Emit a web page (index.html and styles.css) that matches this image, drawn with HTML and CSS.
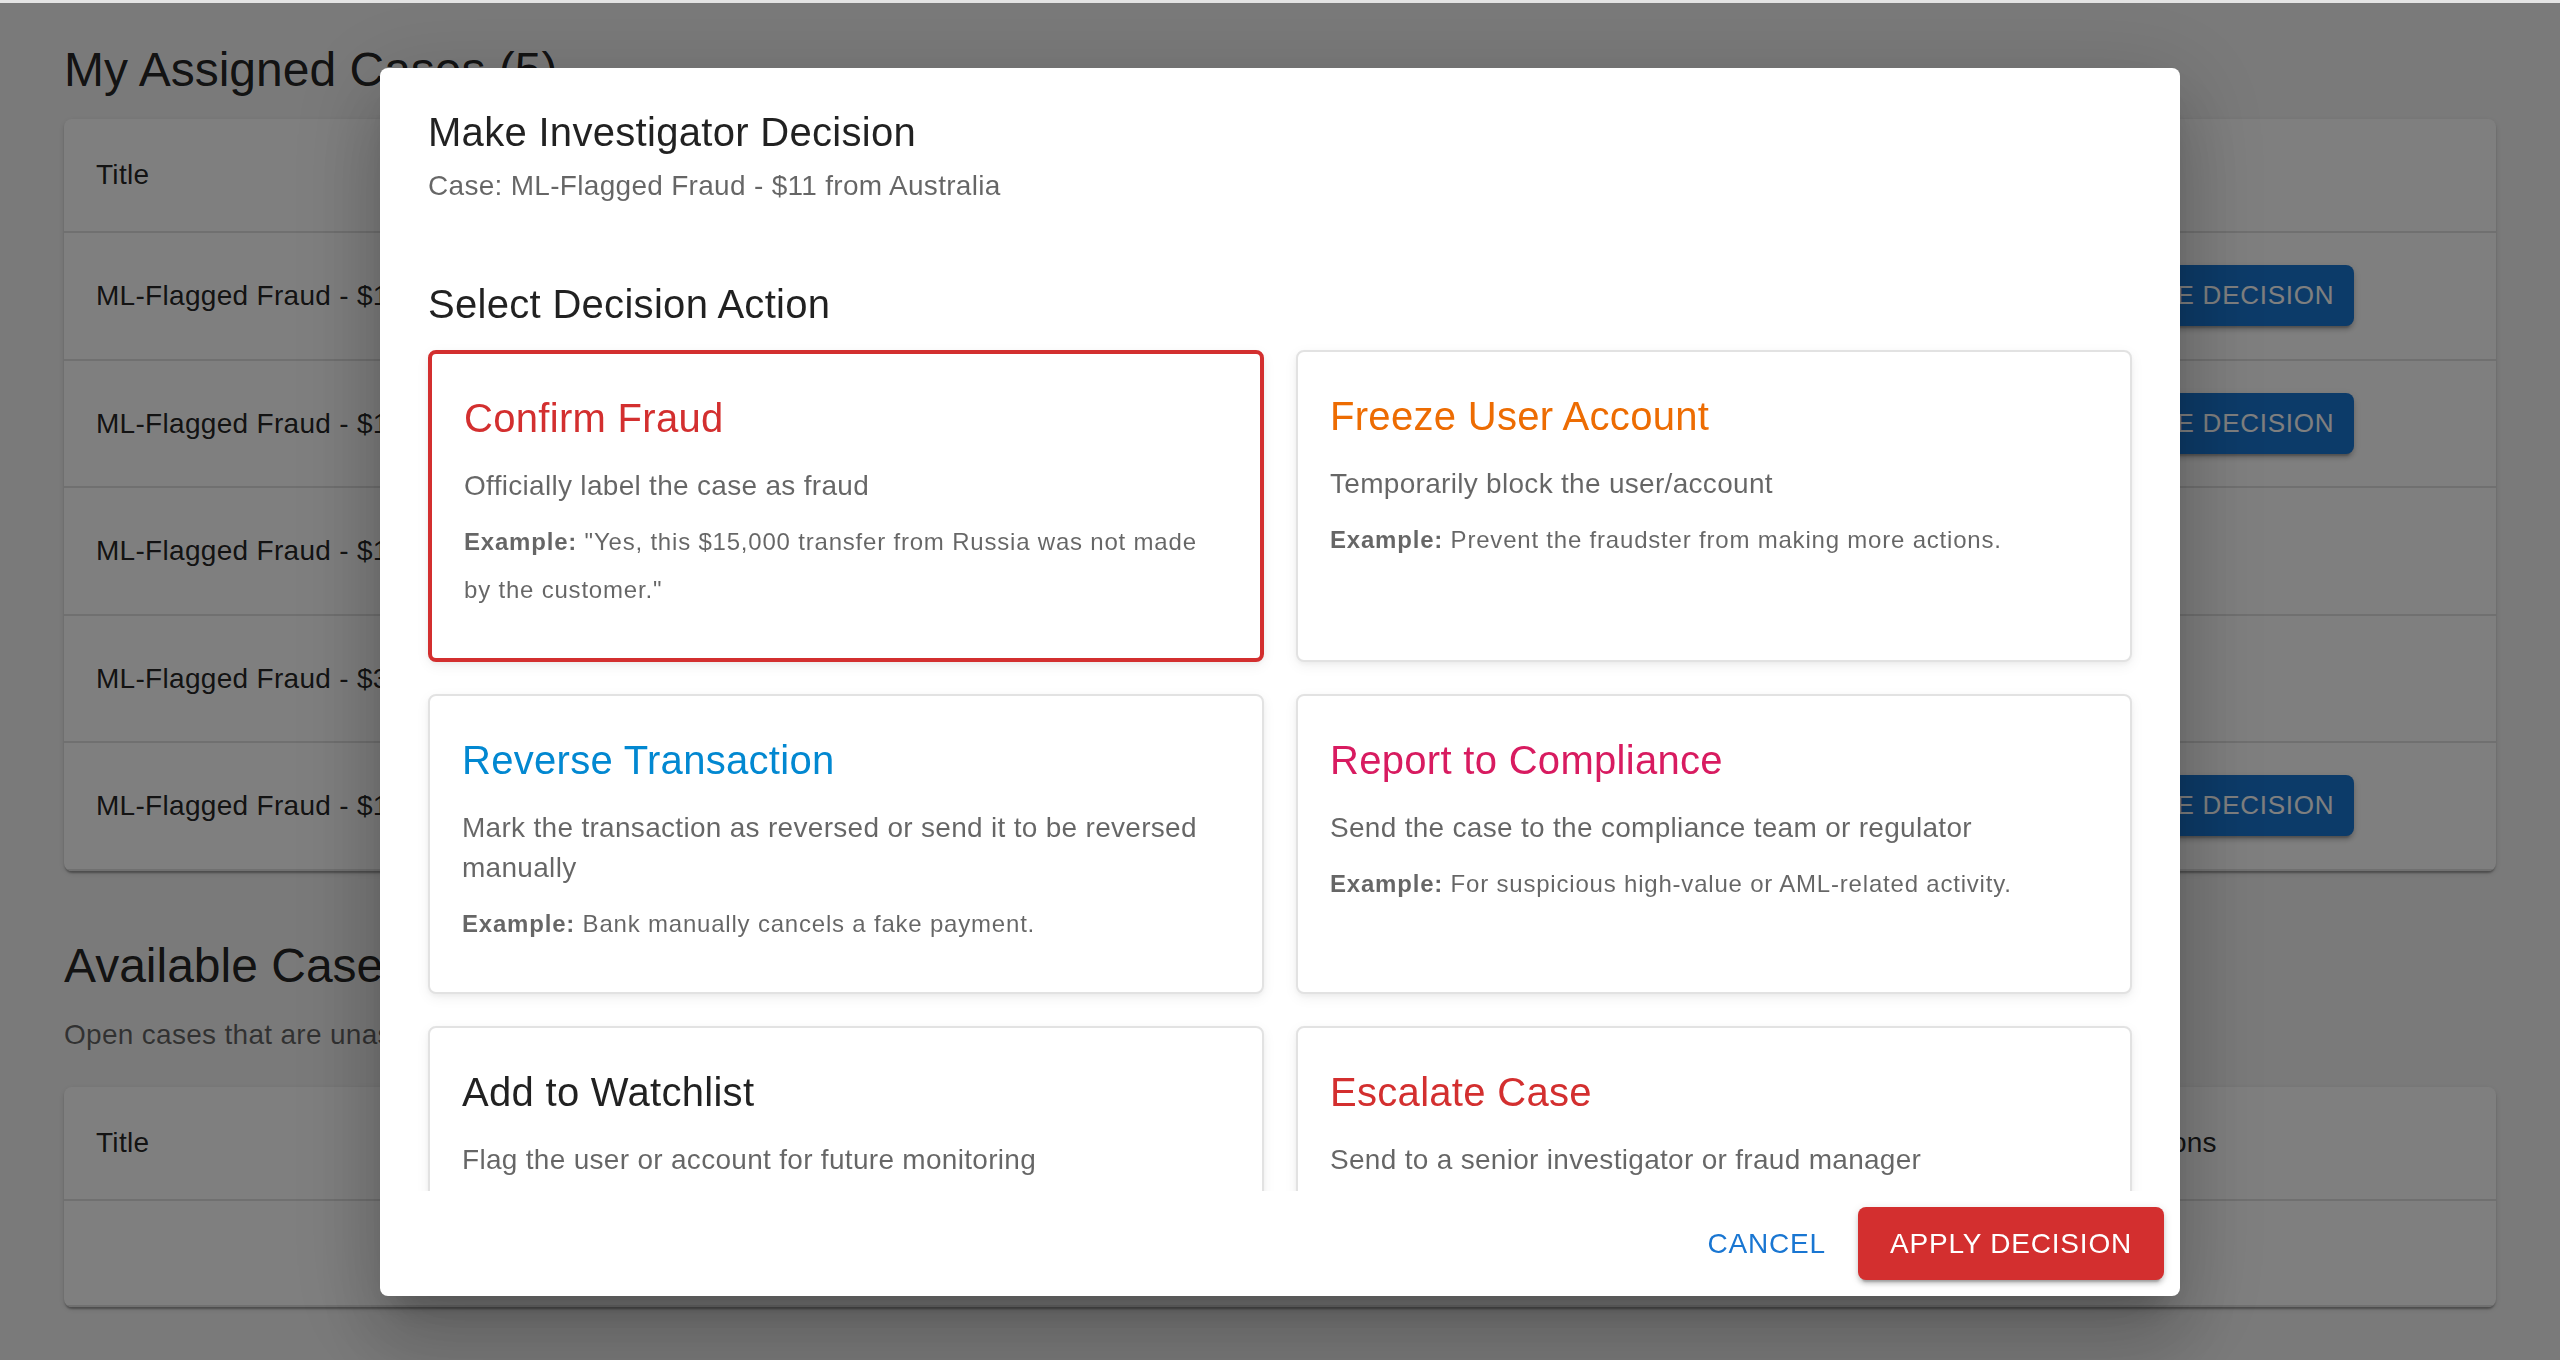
FILE: index.html
```html
<!DOCTYPE html>
<html lang="en">
<head>
<meta charset="utf-8">
<title>Investigator Cases</title>
<link rel="stylesheet" href="styles.css">
</head>
<body>
<div class="page">
  <h2 class="section-title">My Assigned Cases (5)</h2>
  <div class="paper">
    <table class="cases">
      <colgroup>
        <col class="w-title"><col class="w-mid"><col class="w-mid"><col class="w-mid"><col class="w-status"><col class="w-actions">
      </colgroup>
      <thead>
        <tr><th>Title</th><th>Amount</th><th>Country</th><th>Risk Score</th><th>Status</th><th>Actions</th></tr>
      </thead>
      <tbody>
        <tr><td>ML-Flagged Fraud - $11 from Australia</td><td>$11</td><td>Australia</td><td>0.91</td><td>Assigned</td><td class="act"><button class="btn-small">Make Decision</button></td></tr>
        <tr><td>ML-Flagged Fraud - $15,000 from Russia</td><td>$15,000</td><td>Russia</td><td>0.97</td><td>Assigned</td><td class="act"><button class="btn-small">Make Decision</button></td></tr>
        <tr><td>ML-Flagged Fraud - $120 from Brazil</td><td>$120</td><td>Brazil</td><td>0.84</td><td>Decided</td><td class="act"></td></tr>
        <tr><td>ML-Flagged Fraud - $3,400 from Nigeria</td><td>$3,400</td><td>Nigeria</td><td>0.88</td><td>Decided</td><td class="act"></td></tr>
        <tr><td>ML-Flagged Fraud - $1,250 from Canada</td><td>$1,250</td><td>Canada</td><td>0.79</td><td>Assigned</td><td class="act"><button class="btn-small">Make Decision</button></td></tr>
      </tbody>
    </table>
  </div>

  <h2 class="section-title spaced">Available Cases</h2>
  <p class="section-sub">Open cases that are unassigned and available to be picked up</p>
  <div class="paper">
    <table class="cases">
      <colgroup>
        <col class="w-title"><col class="w-mid"><col class="w-mid"><col class="w-mid"><col class="w-created"><col class="w-actions2">
      </colgroup>
      <thead>
        <tr><th>Title</th><th>Amount</th><th>Country</th><th>Risk Score</th><th>Created</th><th>Actions</th></tr>
      </thead>
      <tbody>
        <tr><td class="empty" colspan="6">No available cases</td></tr>
      </tbody>
    </table>
  </div>
</div>

<div class="backdrop">
  <div class="dialog">
    <div class="dialog-head">
      <h2 class="dialog-title">Make Investigator Decision</h2>
      <p class="dialog-sub">Case: ML-Flagged Fraud - $11 from Australia</p>
    </div>
    <div class="dialog-body">
      <h3 class="select-title">Select Decision Action</h3>
      <div class="grid">
        <div class="card selected">
          <h4 class="card-title c-red">Confirm Fraud</h4>
          <p class="card-desc">Officially label the case as fraud</p>
          <p class="card-ex"><b>Example:</b> "Yes, this $15,000 transfer from Russia was not made by the customer."</p>
        </div>
        <div class="card">
          <h4 class="card-title c-orange">Freeze User Account</h4>
          <p class="card-desc">Temporarily block the user/account</p>
          <p class="card-ex"><b>Example:</b> Prevent the fraudster from making more actions.</p>
        </div>
        <div class="card">
          <h4 class="card-title c-blue">Reverse Transaction</h4>
          <p class="card-desc">Mark the transaction as reversed or send it to be reversed manually</p>
          <p class="card-ex"><b>Example:</b> Bank manually cancels a fake payment.</p>
        </div>
        <div class="card">
          <h4 class="card-title c-pink">Report to Compliance</h4>
          <p class="card-desc">Send the case to the compliance team or regulator</p>
          <p class="card-ex"><b>Example:</b> For suspicious high-value or AML-related activity.</p>
        </div>
        <div class="card">
          <h4 class="card-title c-dark">Add to Watchlist</h4>
          <p class="card-desc">Flag the user or account for future monitoring</p>
          <p class="card-ex"><b>Example:</b> Suspicious but not yet confirmed behaviour.</p>
        </div>
        <div class="card">
          <h4 class="card-title c-red">Escalate Case</h4>
          <p class="card-desc">Send to a senior investigator or fraud manager</p>
          <p class="card-ex"><b>Example:</b> Complex cases that need a second opinion.</p>
        </div>
      </div>
    </div>
    <div class="dialog-actions">
      <button class="btn-text">Cancel</button>
      <button class="btn-apply">Apply Decision</button>
    </div>
  </div>
</div>
</body>
</html>
```

FILE: styles.css
```css
* { box-sizing: border-box; }

html, body {
  margin: 0;
  padding: 0;
}

body {
  background: #f5f5f5;
  font-family: "Liberation Sans", Arial, Helvetica, sans-serif;
  color: rgba(0, 0, 0, 0.87);
  width: 2560px;
  height: 1360px;
  overflow: hidden;
}

/* ---------- background page ---------- */
.page {
  padding: 38px 64px 0;
}

.section-title {
  margin: 0 0 17px;
  font-size: 48px;
  line-height: 64px;
  font-weight: 400;
}

.section-title.spaced {
  margin-top: 63px;
}

.section-sub {
  margin: 0 0 32px;
  font-size: 28px;
  line-height: 40px;
  color: rgba(0, 0, 0, 0.6);
  letter-spacing: 0.01071em;
}

.paper {
  background: #fff;
  border-radius: 8px;
  box-shadow: 0 4px 2px -2px rgba(0,0,0,0.2), 0 2px 2px 0 rgba(0,0,0,0.14), 0 2px 6px 0 rgba(0,0,0,0.12);
  overflow: hidden;
}

.cases {
  width: 100%;
  table-layout: fixed;
  border-collapse: separate;
  border-spacing: 0;
}

.w-title { width: 700px; }
.w-mid { width: 300px; }
.w-status { width: 370px; }
.w-actions { width: 462px; }
.w-created { width: 427px; }
.w-actions2 { width: 405px; }

.cases th,
.cases td {
  text-align: left;
  padding: 32px;
  font-size: 28px;
  border-bottom: 2px solid #e0e0e0;
  white-space: nowrap;
  overflow: hidden;
  letter-spacing: 0.01071em;
}

.cases th {
  font-weight: 500;
  line-height: 48px;
}

.cases td {
  line-height: 61.6px;
  font-weight: 400;
}

.cases td.act {
  padding-left: 64px;
}

.cases td.empty {
  line-height: 40px;
  text-align: center;
  color: rgba(0, 0, 0, 0.6);
}

.btn-small {
  display: inline-flex;
  align-items: center;
  height: 61px;
  padding: 0 20px;
  vertical-align: top;
  border: 0;
  border-radius: 8px;
  background: #1976d2;
  color: #fff;
  font-family: inherit;
  font-size: 26px;
  font-weight: 500;
  letter-spacing: 0.02857em;
  text-transform: uppercase;
  box-shadow: 0 6px 2px -4px rgba(0,0,0,0.2), 0 4px 4px 0 rgba(0,0,0,0.14), 0 2px 10px 0 rgba(0,0,0,0.12);
}

/* ---------- dialog overlay ---------- */
.backdrop {
  position: fixed;
  inset: 0;
  background: rgba(0, 0, 0, 0.5);
  border-top: 3px solid #e4e4e4;
  display: flex;
  justify-content: center;
  align-items: flex-start;
  padding-top: 65px;
}

.dialog {
  width: 1800px;
  height: 1228px;
  background: #fff;
  border-radius: 8px;
  display: flex;
  flex-direction: column;
  box-shadow: 0 22px 30px -14px rgba(0,0,0,0.2), 0 48px 76px 6px rgba(0,0,0,0.14), 0 18px 92px 16px rgba(0,0,0,0.12);
}

.dialog-head {
  padding: 32px 48px 0;
}

.dialog-title {
  margin: 0;
  font-size: 40px;
  line-height: 64px;
  font-weight: 500;
  letter-spacing: 0.0075em;
  color: rgba(0, 0, 0, 0.87);
}

.dialog-sub {
  margin: 2px 0 0;
  font-size: 28px;
  line-height: 40px;
  letter-spacing: 0.01071em;
  color: rgba(0, 0, 0, 0.6);
}

.dialog-body {
  flex: 1;
  overflow: hidden;
  padding: 0 48px;
}

.select-title {
  margin: 66px 0 14px;
  font-size: 40px;
  line-height: 64px;
  font-weight: 500;
  letter-spacing: 0.0075em;
  color: rgba(0, 0, 0, 0.87);
}

.grid {
  display: grid;
  grid-template-columns: 1fr 1fr;
  gap: 32px;
}

.card {
  background: #fff;
  border: 2px solid #e2e2e2;
  border-radius: 8px;
  padding: 32px 32px 44px;
  box-shadow: 0 4px 14px rgba(0, 0, 0, 0.06), 0 2px 4px rgba(0, 0, 0, 0.04);
}

.card.selected {
  border: 4px solid #d32f2f;
}

.card-title {
  margin: 0 0 16px;
  font-size: 40px;
  line-height: 64px;
  font-weight: 500;
  letter-spacing: 0.0075em;
}

.c-red { color: #d32f2f; }
.c-orange { color: #ed6c02; }
.c-blue { color: #0288d1; }
.c-pink { color: #d81b60; }
.c-dark { color: rgba(0, 0, 0, 0.87); }

.card-desc {
  margin: 0;
  font-size: 28px;
  line-height: 40px;
  letter-spacing: 0.01071em;
  color: rgba(0, 0, 0, 0.6);
}

.card-ex {
  margin: 12px 0 0;
  font-size: 24px;
  line-height: 48px;
  letter-spacing: 0.03333em;
  color: rgba(0, 0, 0, 0.6);
}

.card-ex b {
  font-weight: 700;
}

.dialog-actions {
  flex: 0 0 105px;
  display: flex;
  justify-content: flex-end;
  align-items: center;
  gap: 16px;
  padding: 16px;
}

.btn-text,
.btn-apply {
  height: 73px;
  border: 0;
  font-family: inherit;
  font-size: 28px;
  font-weight: 500;
  letter-spacing: 0.02857em;
  text-transform: uppercase;
  border-radius: 8px;
  cursor: pointer;
}

.btn-text {
  background: transparent;
  color: #1976d2;
  padding: 0 16px;
  min-width: 128px;
}

.btn-apply {
  background: #d32f2f;
  color: #fff;
  padding: 0 32px;
  box-shadow: 0 6px 2px -4px rgba(0,0,0,0.2), 0 4px 4px 0 rgba(0,0,0,0.14), 0 2px 10px 0 rgba(0,0,0,0.12);
}
```
